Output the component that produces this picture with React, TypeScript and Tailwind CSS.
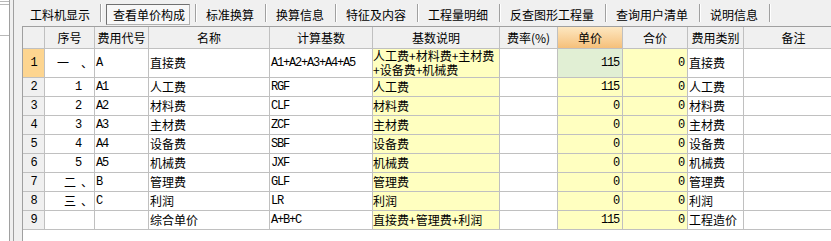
import React from 'react'

type Row = {
  n: number
  seq: string
  seqGap?: number
  code: string
  name: string
  base: string
  desc: string[]
  price: number
  total: number
  cat: string
  tall?: boolean
}

const rows: Row[] = [
  { n: 1, seq: '一', seqGap: 12, code: 'A', name: '直接费', base: 'A1+A2+A3+A4+A5', desc: ['人工费+材料费+主材费', '+设备费+机械费'], price: 115, total: 0, cat: '直接费', tall: true },
  { n: 2, seq: '1', code: 'A1', name: '人工费', base: 'RGF', desc: ['人工费'], price: 115, total: 0, cat: '人工费' },
  { n: 3, seq: '2', code: 'A2', name: '材料费', base: 'CLF', desc: ['材料费'], price: 0, total: 0, cat: '材料费' },
  { n: 4, seq: '3', code: 'A3', name: '主材费', base: 'ZCF', desc: ['主材费'], price: 0, total: 0, cat: '主材费' },
  { n: 5, seq: '4', code: 'A4', name: '设备费', base: 'SBF', desc: ['设备费'], price: 0, total: 0, cat: '设备费' },
  { n: 6, seq: '5', code: 'A5', name: '机械费', base: 'JXF', desc: ['机械费'], price: 0, total: 0, cat: '机械费' },
  { n: 7, seq: '二', seqGap: 5, code: 'B', name: '管理费', base: 'GLF', desc: ['管理费'], price: 0, total: 0, cat: '管理费' },
  { n: 8, seq: '三', seqGap: 5, code: 'C', name: '利润', base: 'LR', desc: ['利润'], price: 0, total: 0, cat: '利润' },
  { n: 9, seq: '', code: '', name: '综合单价', base: 'A+B+C', desc: ['直接费+管理费+利润'], price: 115, total: 0, cat: '工程造价' },
]

const tabs = ['工料机显示', '查看单价构成', '标准换算', '换算信息', '特征及内容', '工程量明细', '反查图形工程量', '查询用户清单', '说明信息']

const mono = "font-['Liberation_Mono',monospace] text-[12px] tracking-[-1.2px]"

function Sep() {
  return <div className="mt-[4px] h-[18px] w-[2px] border-l border-r border-l-[#a0a0a0] border-r-white" />
}

function Tabs() {
  return (
    <div className="h-[26px] flex shrink-0">
      {tabs.map((t, i) => {
        if (i === 1)
          return (
            <React.Fragment key={t}>
              <div className="ml-[4px] mr-[5px] mt-[4px] h-[21px] w-[84px] border border-[#b0b0b0] border-l-[#707070] border-t-[#707070] bg-[#f7f7f7] pl-[6px] leading-[19px]">{t}</div>
              <Sep />
            </React.Fragment>
          )
        return (
          <React.Fragment key={t}>
            <div className={`${i === 0 ? 'pl-[8px] pr-[10px]' : 'pl-[9px] pr-[11px]'} pt-[5px] leading-[20px] whitespace-nowrap`}>{t}</div>
            <Sep />
          </React.Fragment>
        )
      })}
    </div>
  )
}

function LeftStrip() {
  return (
    <div className="w-[22px] h-full flex shrink-0">
      <div className="w-[9px] h-full bg-white flex flex-col">
        <div className="mt-[1px] h-[1px] bg-[#b8b8b8]" />
        <div className="mt-[2px] h-[1px] bg-[#b8b8b8]" />
        <div className="mt-[30px] h-[1px] bg-[#b8b8b8]" />
      </div>
      <div className="w-[1px] bg-[#a0a0a0]" />
      <div className="w-[3px] bg-[#f0f0f0]" />
      <div className="w-[1px] bg-[#a0a0a0]" />
      <div className="w-[8px] bg-[#f0f0f0]" />
    </div>
  )
}

const cell = 'border-r border-b border-[#c0c0c0] shrink-0 flex items-center overflow-hidden whitespace-nowrap'

function Header() {
  const h = (w: string, label: string, extra = 'bg-[#f0f0f0]') => (
    <div className={`${cell} ${w} ${extra} justify-center`}>{label}</div>
  )
  return (
    <div className="h-[22px] flex">
      <div className={`${cell} w-[22px] bg-[#f0f0f0]`} />
      {h('w-[50px]', '序号')}
      {h('w-[54px]', '费用代号')}
      {h('w-[121px]', '名称')}
      {h('w-[103px]', '计算基数')}
      {h('w-[127px]', '基数说明')}
      {h('w-[58px]', '费率(%)')}
      {h('w-[65px]', '单价', 'bg-linear-to-b from-[#fde7c0] to-[#f5c07a]')}
      {h('w-[65px]', '合价')}
      {h('w-[56px]', '费用类别')}
      {h('w-[100px]', '备注')}
    </div>
  )
}

function BodyRow({ r }: { r: Row }) {
  const first = r.n === 1
  return (
    <div className={`${r.tall ? 'h-[29px]' : 'h-[19px]'} flex`}>
      <div className={`${cell} w-[22px] justify-center ${mono} ${first ? 'bg-[#fdd590]' : 'bg-[#f0f0f0]'}`}>{r.n}</div>
      <div className={`${cell} w-[50px] justify-end`}>
        {r.seqGap ? (
          <span className="pr-[1px]">
            <span>{r.seq}</span>
            <span style={{ marginLeft: r.seqGap }}>、</span>
          </span>
        ) : (
          <span className={`${mono} pr-[13px]`}>{r.seq}</span>
        )}
      </div>
      <div className={`${cell} w-[54px] pl-[1px] ${mono}`}>{r.code}</div>
      <div className={`${cell} w-[121px] pl-[1px]`}>{r.name}</div>
      <div className={`${cell} w-[103px] pl-[1px] ${mono}`}>{r.base}</div>
      <div className="border-r border-b border-[#c0c0c0] shrink-0 flex items-center whitespace-nowrap w-[127px] bg-[#ffffc0]">
        <div className="leading-[14px]">
          {r.desc.map(d => <div key={d}>{d}</div>)}
        </div>
      </div>
      <div className={`${cell} w-[58px]`} />
      <div className={`${cell} w-[65px] justify-end pr-[3px] ${mono} ${first ? 'bg-[#e1efd4]' : 'bg-[#ffffc0]'}`}>{r.price}</div>
      <div className={`${cell} w-[65px] justify-end pr-[3px] ${mono} bg-[#ffffc0]`}>{r.total}</div>
      <div className={`${cell} w-[56px] pl-[1px]`}>{r.cat}</div>
      <div className={`${cell} w-[100px]`} />
    </div>
  )
}

export default function App() {
  return (
    <div className="w-[831px] h-[241px] flex bg-[#f0f0f0] overflow-hidden font-['Noto_Sans_CJK_SC',sans-serif] text-[12px] text-black">
      <LeftStrip />
      <div className="flex-1 flex flex-col min-w-0">
        <Tabs />
        <div className="flex-1 bg-white border-t border-l border-[#a0a0a0] overflow-hidden">
          <Header />
          {rows.map(r => <BodyRow key={r.n} r={r} />)}
        </div>
      </div>
    </div>
  )
}
